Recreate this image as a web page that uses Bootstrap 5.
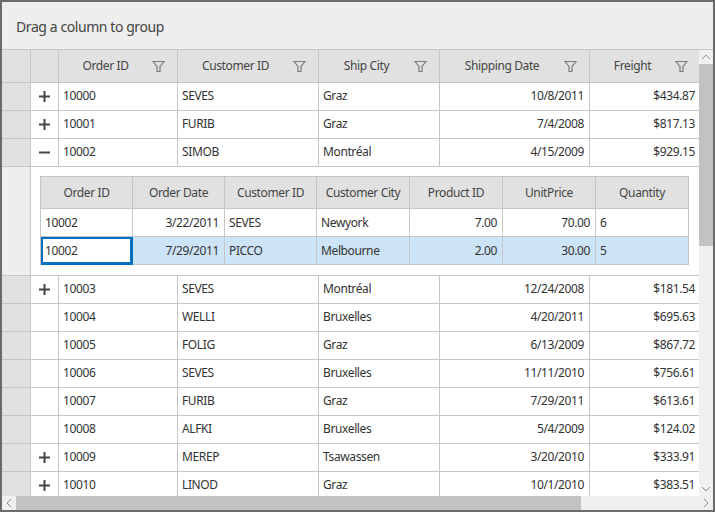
<!DOCTYPE html>
<html lang="en">
<head>
  <meta charset="UTF-8" />
  <title>Master details grid</title>
  <link href="https://cdn.jsdelivr.net/npm/bootstrap@5.3.0/dist/css/bootstrap.min.css" rel="stylesheet" />
  <style>
    html, body { height: 100%; overflow: hidden; background: #fff; }
    body { font-family: "Noto Sans", "Liberation Sans", sans-serif; font-size: 12px; color: #333; letter-spacing: -0.38px; }
    .grid-shell { width: 715px; height: 512px; border: 2px solid #6b6b6b; }
    .drop-area { height: 48px; background: #eee; font-size: 14px; color: #444; padding: 2px 0 0 14px; border-bottom: 1px solid #c6c6c6; letter-spacing: -0.42px; }
    .grid-middle { height: 446px; }
    .grid-clip { width: 697px; overflow: hidden; }
    table.dg { table-layout: fixed; border-collapse: separate; border-spacing: 0; margin: 0; --bs-table-bg: transparent; }
    table.dg th, table.dg td { padding: 0 5px 2px 4px; border: 0 solid #c6c6c6; border-right-width: 1px; border-bottom-width: 1px; height: 28px; font-weight: 400; white-space: nowrap; vertical-align: middle; color: #333; box-shadow: none; }
    table.outer { width: 699px; }
    table.dg.outer thead th { height: 33px; background: #e1e1e1; text-align: center; color: #444; position: relative; }
    table.dg.outer thead th.fw { padding: 0 29px 0 4px; }
    .funnel { position: absolute; top: 10px; right: 12px; width: 13px; height: 13px; }
    table.dg td.rh { background: #e1e1e1; padding: 0; }
    table.dg td.rh-light { background: #eee; padding: 0; }
    table.dg td.tog { padding: 0; text-align: center; }
    table.dg td.tog svg { display: block; margin: auto; }
    .num { text-align: right; }
    table.dg td.det { height: 109px; padding: 9px 0 10px 9px; vertical-align: top; border-right-width: 0; }
    table.inner { width: 649px; border-left: 1px solid #c6c6c6; border-top: 1px solid #c6c6c6; }
    table.dg.inner thead th { height: 32px; background: #e1e1e1; text-align: center; color: #444; padding: 0; }
    table.dg.inner td { padding-bottom: 0; }
    tr.picked td { background: #cde3f6; }
    table.dg tr.picked td.cur { background: #fff; box-shadow: inset 0 0 0 2px #0071c1; border-color: #0071c1; }
    .vbar { width: 14px; background: #f0f0f0; }
    .vthumb { height: 182px; background: #c2c2c2; }
    .sbtn { width: 14px; height: 14px; flex: none; }
    .hbar { height: 14px; background: #f0f0f0; }
    .hthumb { width: 565px; background: #c2c2c2; }
  </style>
</head>
<body class="m-0">
  <svg width="0" height="0" class="position-absolute">
    <defs>
      <symbol id="i-funnel" viewBox="0 0 13 13"><path d="M1 1.5h11L8 6.5v5H5v-5z" fill="none" stroke="#7a7a7a" stroke-width="1.2" /></symbol>
      <symbol id="i-plus" viewBox="0 0 11 11"><path d="M0 5.5h11M5.5 0v11" fill="none" stroke="#444" stroke-width="2" /></symbol>
      <symbol id="i-minus" viewBox="0 0 11 11"><path d="M0 5.5h11" fill="none" stroke="#444" stroke-width="2" /></symbol>
    </defs>
  </svg>

  <div class="grid-shell d-flex flex-column">
    <div class="drop-area d-flex align-items-center">Drag a column to group</div>

    <div class="grid-middle d-flex">
      <div class="grid-clip">
        <table class="table dg outer">
          <colgroup>
            <col style="width:29px"><col style="width:28px"><col style="width:119px"><col style="width:141px"><col style="width:121px"><col style="width:150px"><col style="width:111px">
          </colgroup>
          <thead>
            <tr>
              <th></th>
              <th></th>
              <th class="fw">Order ID<svg class="funnel"><use href="#i-funnel" /></svg></th>
              <th class="fw">Customer ID<svg class="funnel"><use href="#i-funnel" /></svg></th>
              <th class="fw">Ship City<svg class="funnel"><use href="#i-funnel" /></svg></th>
              <th class="fw">Shipping Date<svg class="funnel"><use href="#i-funnel" /></svg></th>
              <th class="fw">Freight<svg class="funnel"><use href="#i-funnel" /></svg></th>
            </tr>
          </thead>
          <tbody>
            <tr><td class="rh"></td><td class="tog"><svg width="11" height="11"><use href="#i-plus" /></svg></td><td>10000</td><td>SEVES</td><td>Graz</td><td class="num">10/8/2011</td><td class="num">$434.87</td></tr>
            <tr><td class="rh"></td><td class="tog"><svg width="11" height="11"><use href="#i-plus" /></svg></td><td>10001</td><td>FURIB</td><td>Graz</td><td class="num">7/4/2008</td><td class="num">$817.13</td></tr>
            <tr><td class="rh"></td><td class="tog"><svg width="11" height="11"><use href="#i-minus" /></svg></td><td>10002</td><td>SIMOB</td><td>Montréal</td><td class="num">4/15/2009</td><td class="num">$929.15</td></tr>
            <tr>
              <td class="rh-light"></td>
              <td class="det" colspan="6">
                <table class="table dg inner">
                  <colgroup>
                    <col style="width:92px"><col style="width:92px"><col style="width:92px"><col style="width:93px"><col style="width:93px"><col style="width:93px"><col style="width:93px">
                  </colgroup>
                  <thead>
                    <tr><th>Order ID</th><th>Order Date</th><th>Customer ID</th><th>Customer City</th><th>Product ID</th><th>UnitPrice</th><th>Quantity</th></tr>
                  </thead>
                  <tbody>
                    <tr><td>10002</td><td class="num">3/22/2011</td><td>SEVES</td><td>Newyork</td><td class="num">7.00</td><td class="num">70.00</td><td>6</td></tr>
                    <tr class="picked"><td class="cur">10002</td><td class="num">7/29/2011</td><td>PICCO</td><td>Melbourne</td><td class="num">2.00</td><td class="num">30.00</td><td>5</td></tr>
                  </tbody>
                </table>
              </td>
            </tr>
            <tr><td class="rh"></td><td class="tog"><svg width="11" height="11"><use href="#i-plus" /></svg></td><td>10003</td><td>SEVES</td><td>Montréal</td><td class="num">12/24/2008</td><td class="num">$181.54</td></tr>
            <tr><td class="rh"></td><td class="tog"></td><td>10004</td><td>WELLI</td><td>Bruxelles</td><td class="num">4/20/2011</td><td class="num">$695.63</td></tr>
            <tr><td class="rh"></td><td class="tog"></td><td>10005</td><td>FOLIG</td><td>Graz</td><td class="num">6/13/2009</td><td class="num">$867.72</td></tr>
            <tr><td class="rh"></td><td class="tog"></td><td>10006</td><td>SEVES</td><td>Bruxelles</td><td class="num">11/11/2010</td><td class="num">$756.61</td></tr>
            <tr><td class="rh"></td><td class="tog"></td><td>10007</td><td>FURIB</td><td>Graz</td><td class="num">7/29/2011</td><td class="num">$613.61</td></tr>
            <tr><td class="rh"></td><td class="tog"></td><td>10008</td><td>ALFKI</td><td>Bruxelles</td><td class="num">5/4/2009</td><td class="num">$124.02</td></tr>
            <tr><td class="rh"></td><td class="tog"><svg width="11" height="11"><use href="#i-plus" /></svg></td><td>10009</td><td>MEREP</td><td>Tsawassen</td><td class="num">3/20/2010</td><td class="num">$333.91</td></tr>
            <tr><td class="rh"></td><td class="tog"><svg width="11" height="11"><use href="#i-plus" /></svg></td><td>10010</td><td>LINOD</td><td>Graz</td><td class="num">10/1/2010</td><td class="num">$383.51</td></tr>
          </tbody>
        </table>
      </div>

      <div class="vbar d-flex flex-column">
        <svg class="sbtn" viewBox="0 0 14 14"><path d="M3 9l4-4 4 4" fill="none" stroke="#8a8a8a" /></svg>
        <div class="vthumb"></div>
        <div class="flex-grow-1"></div>
        <svg class="sbtn" viewBox="0 0 14 14"><path d="M3 5l4 4 4-4" fill="none" stroke="#8a8a8a" /></svg>
      </div>
    </div>

    <div class="hbar d-flex">
      <svg class="sbtn" viewBox="0 0 14 14"><path d="M9 3L5 7l4 4" fill="none" stroke="#8a8a8a" /></svg>
      <div class="hthumb"></div>
      <div class="flex-grow-1"></div>
      <svg class="sbtn" viewBox="0 0 14 14"><path d="M5 3l4 4-4 4" fill="none" stroke="#8a8a8a" /></svg>
    </div>
  </div>

  <script src="https://cdn.jsdelivr.net/npm/bootstrap@5.3.0/dist/js/bootstrap.bundle.min.js"></script>
</body>
</html>
